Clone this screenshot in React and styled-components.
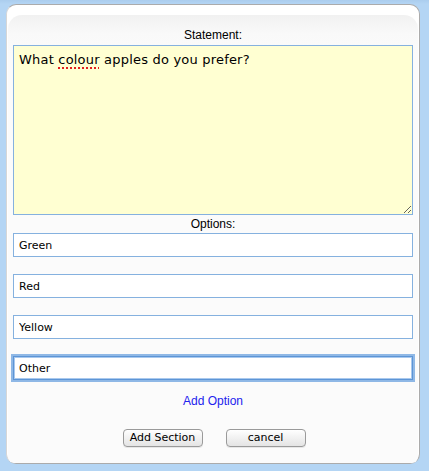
import React, { useState } from "react";
import styled, { createGlobalStyle } from "styled-components";

const GlobalStyle = createGlobalStyle`
  html, body {
    margin: 0;
    padding: 0;
    background: #b4d5f4;
  }
  body {
    font-family: "Liberation Sans", Arial, sans-serif;
  }
`;

const Backdrop = styled.div`
  width: 429px;
  height: 471px;
  padding: 4px 0 0 6px;
  box-sizing: border-box;
  background: linear-gradient(#abcdee 0, #b4d5f4 4px);
`;

const Dialog = styled.div`
  width: 414px;
  height: 460px;
  box-sizing: border-box;
  background: #ffffff;
  border: 1px solid #ababab;
  border-left-color: #d6d6d6;
  border-radius: 10px;
  padding: 10px 1px 0 1px;
  display: flex;
  flex-direction: column;
`;

const Panel = styled.div`
  flex: 1;
  border-radius: 14px 14px 6px 6px;
  background: linear-gradient(#f1f1f1 0, #f9f9f9 18px, #fbfbfb 40px);
  padding: 13px 5px 0 5px;
  display: flex;
  flex-direction: column;
  align-items: stretch;
`;

const Label = styled.div`
  font-size: 12px;
  line-height: 14px;
  color: #000;
  text-align: center;
  margin: ${(p) => p.$margin || "0"};
`;

const StatementBox = styled.div`
  height: 170px;
  box-sizing: border-box;
  background: #ffffd2;
  border: 1px solid #85b1df;
  padding: 5px 5px;
  font-family: "DejaVu Sans", Verdana, sans-serif;
  font-size: 13px;
  letter-spacing: 0.2px;
  line-height: 17px;
  color: #000;
  resize: vertical;
  overflow: auto;
  outline: none;
`;

const Misspelled = styled.span`
  text-decoration: underline dotted #e22020;
  text-decoration-thickness: 2px;
  text-underline-offset: 3px;
`;

const OptionInput = styled.input`
  display: block;
  width: 100%;
  height: 24px;
  box-sizing: border-box;
  margin: 0 0 17px 0;
  padding: 0 5px;
  background: #ffffff;
  border: 1px solid ${(p) => (p.$focused ? "#5d95d6" : "#85b1df")};
  box-shadow: ${(p) =>
    p.$focused ? "0 0 0 2px #8fb8e6, inset 0 0 0 1px #a9c9ee" : "none"};
  font-family: "DejaVu Sans", Verdana, sans-serif;
  font-size: 11px;
  color: #000;
  outline: none;
`;

const AddLink = styled.a`
  align-self: center;
  font-size: 12px;
  line-height: 14px;
  color: #2222ee;
  text-decoration: none;
  margin-top: -3px;
  cursor: pointer;
`;

const ButtonRow = styled.div`
  display: flex;
  justify-content: center;
  gap: 23px;
  margin-top: 21px;
  padding-left: 2px;
`;

const Button = styled.button`
  width: 80px;
  height: 18px;
  padding: 0;
  border: 1px solid #9a9a9a;
  border-radius: 4px;
  background: linear-gradient(#ffffff, #f1f1f1 50%, #e4e4e4);
  font-family: "DejaVu Sans", Verdana, sans-serif;
  font-size: 11px;
  line-height: 16px;
  color: #000;
  box-shadow: 0 1px 0 rgba(0, 0, 0, 0.08);
  cursor: pointer;
`;

const App = () => {
  const [options, setOptions] = useState(["Green", "Red", "Yellow", "Other"]);

  const updateOption = (i, value) => {
    setOptions((prev) => prev.map((o, idx) => (idx === i ? value : o)));
  };

  return (
    <>
      <GlobalStyle />
      <Backdrop>
        <Dialog>
          <Panel>
            <Label $margin="0 0 3px 0">Statement:</Label>
            <StatementBox>
              What <Misspelled>colour</Misspelled> apples do you prefer?
            </StatementBox>
            <Label $margin="2px 0 2px 0">Options:</Label>
            {options.map((o, i) => (
              <OptionInput
                key={i}
                value={o}
                $focused={i === options.length - 1}
                onChange={(e) => updateOption(i, e.target.value)}
              />
            ))}
            <AddLink onClick={() => setOptions([...options, ""])}>
              Add Option
            </AddLink>
            <ButtonRow>
              <Button>Add Section</Button>
              <Button>cancel</Button>
            </ButtonRow>
          </Panel>
        </Dialog>
      </Backdrop>
    </>
  );
};

export default App;
